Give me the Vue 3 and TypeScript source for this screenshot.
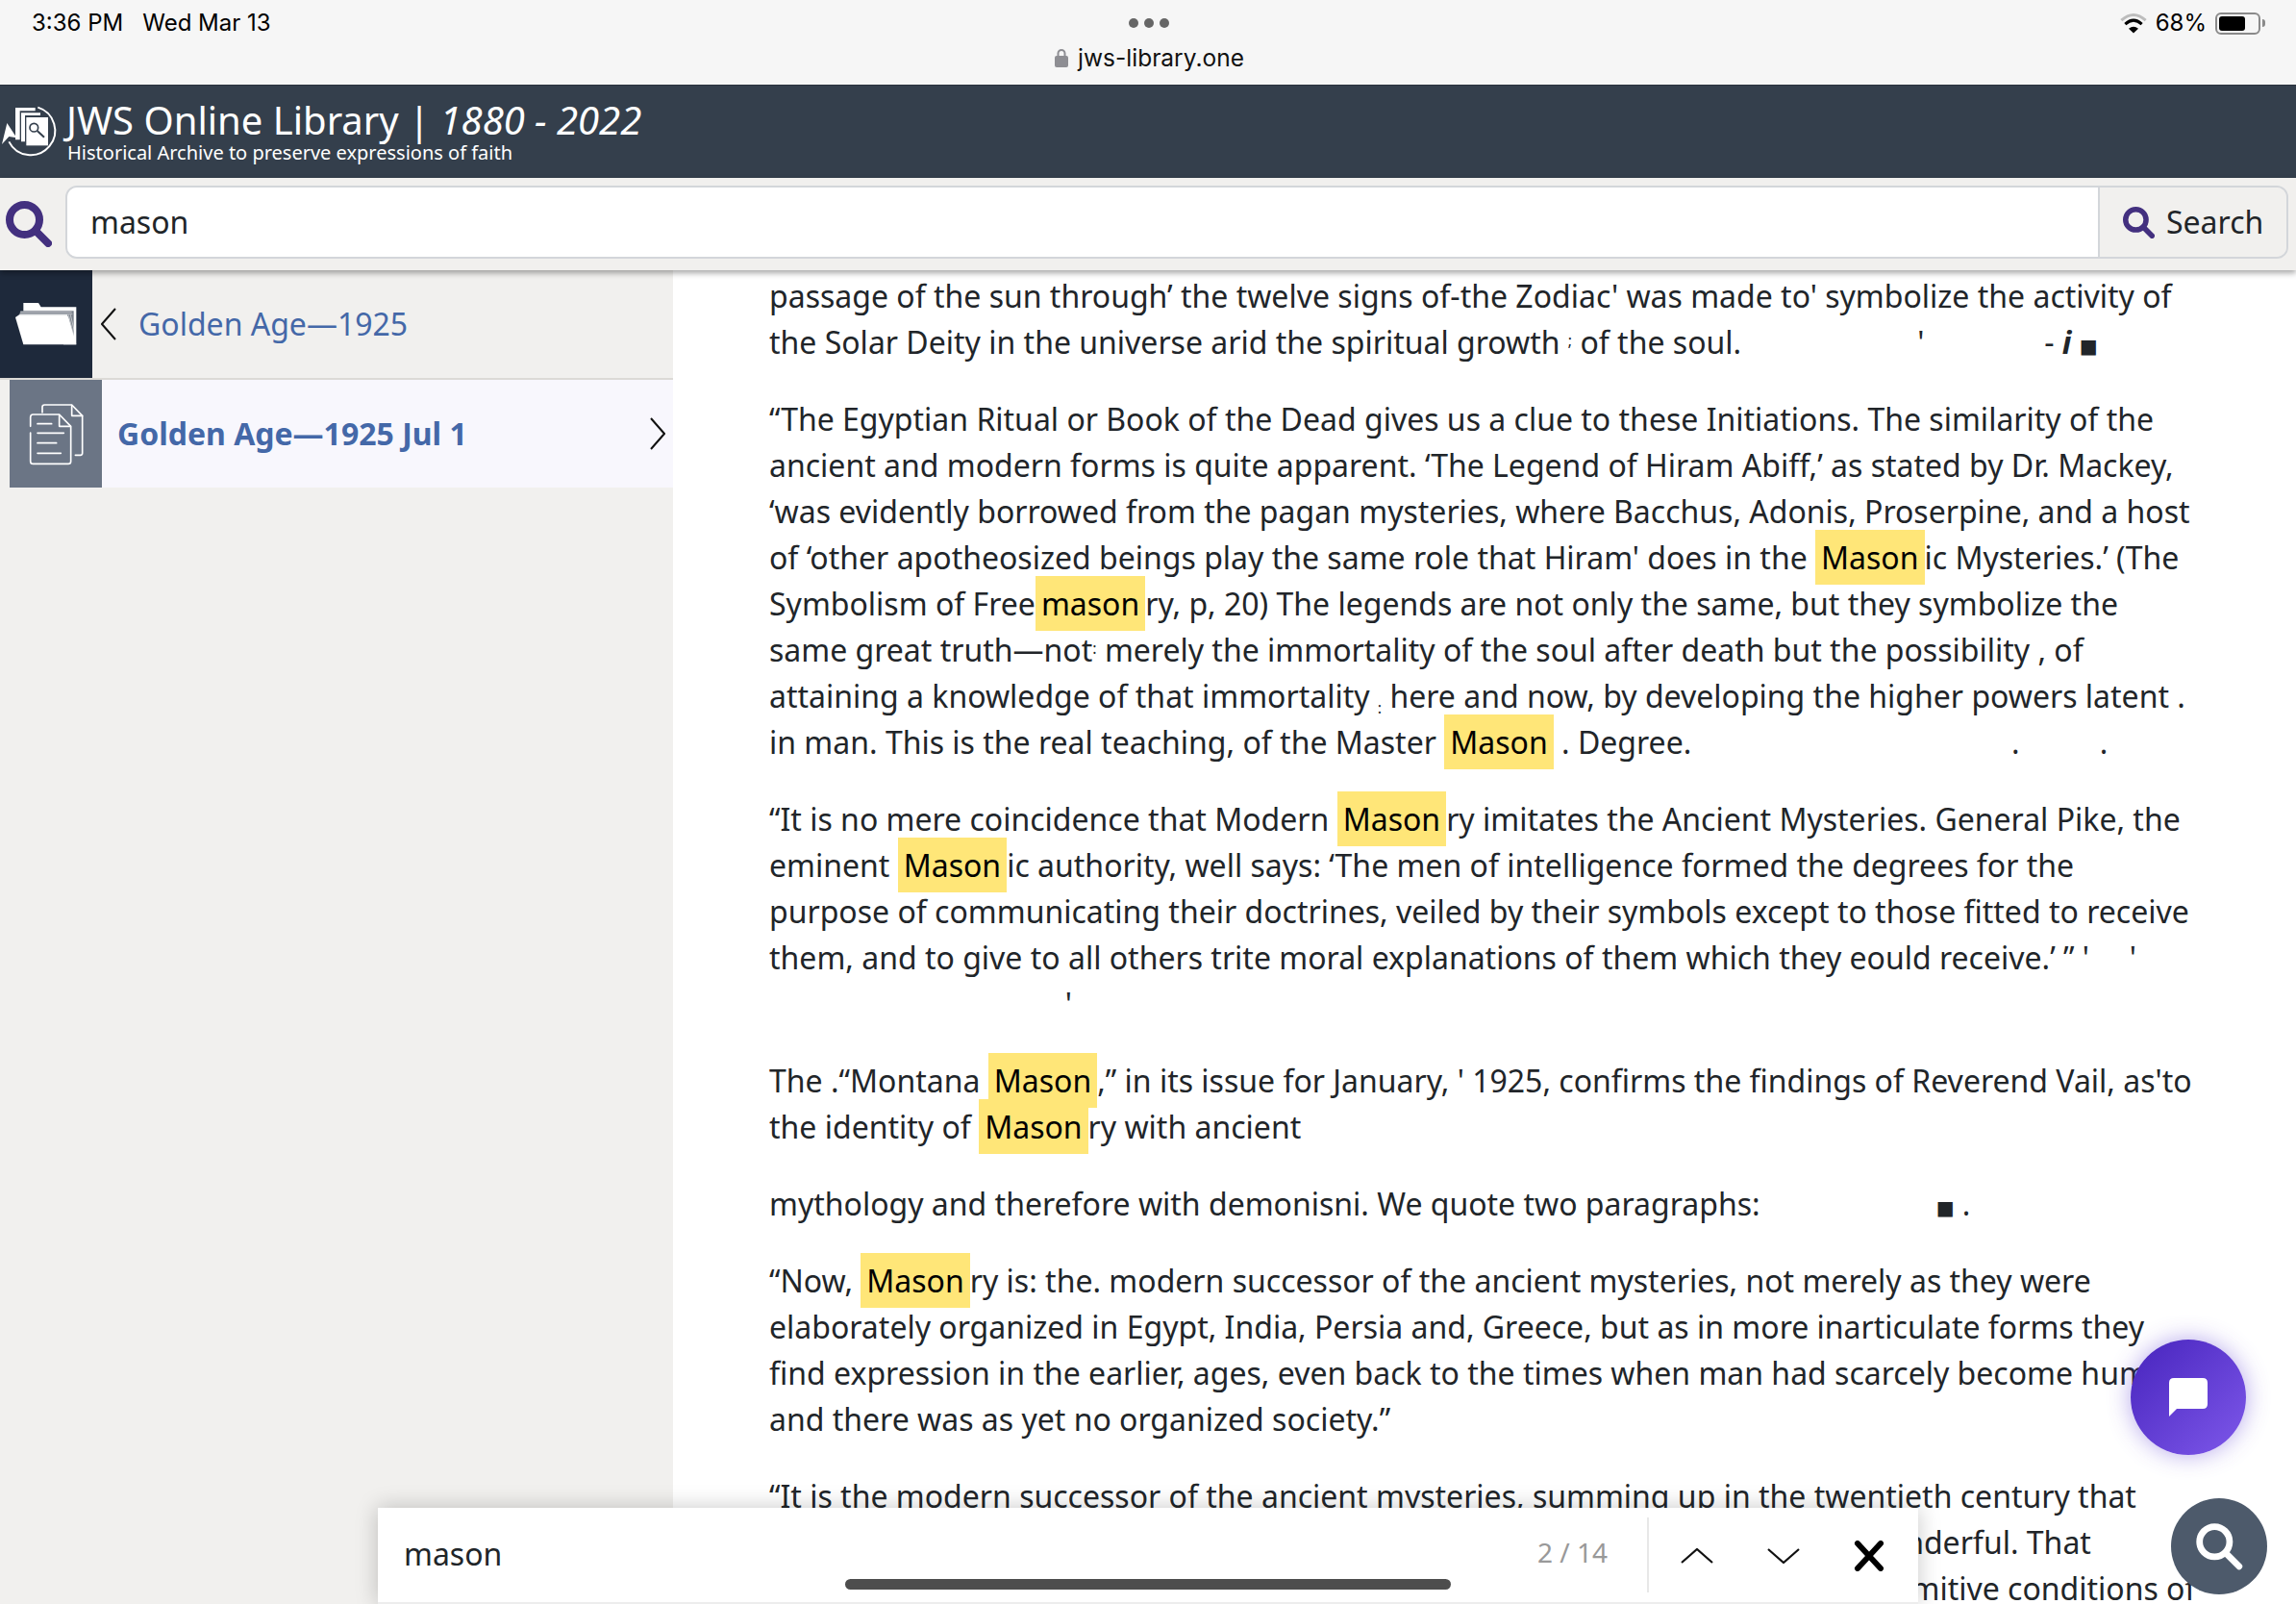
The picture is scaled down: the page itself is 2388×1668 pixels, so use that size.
<script setup lang="ts">
interface Segment {
  kind: 'text' | 'mark' | 'speck' | 'low' | 'block' | 'stray'
  text: string
}

const sp = (n: number) => ' '.repeat(n)

// [x] = search hit, {x} = raised ocr speck, _x_ = lowered speck, ^x^ = square, ~x~ = stray bold italic
const rawParagraphs: string[] = [
  `passage of the sun through’ the twelve signs of-the Zodiac' was made to' symbolize the activity of the Solar Deity in the universe arid the spiritual growth {;} of the soul.${sp(22)}'${sp(15)}- ~i~ ^■^`,
  `“The Egyptian Ritual or Book of the Dead gives us a clue to these Initiations. The similarity of the ancient and modern forms is quite apparent. ‘The Legend of Hiram Abiff,’ as stated by Dr. Mackey, ‘was evidently borrowed from the pagan mysteries, where Bacchus, Adonis, Proserpine, and a host of ‘other apotheosized beings play the same role that Hiram' does in the [Mason]ic Mysteries.’ (The Symbolism of Free[mason]ry, p, 20) The legends are not only the same, but they symbolize the same great truth—not{:} merely the immortality of the soul after death but the possibility , of attaining a knowledge of that immortality _:_ here and now, by developing the higher powers latent . in man. This is the real teaching, of the Master [Mason] . Degree.${sp(40)}.${sp(10)}.`,
  `“It is no mere coincidence that Modern [Mason]ry imitates the Ancient Mysteries. General Pike, the eminent [Mason]ic authority, well says: ‘The men of intelligence formed the degrees for the purpose of communicating their doctrines, veiled by their symbols except to those fitted to receive them, and to give to all others trite moral explanations of them which they eould receive.’ ” '${sp(5)}'\n${sp(37)}'`,
  `The .“Montana [Mason],” in its issue for January, ' 1925, confirms the findings of Reverend Vail, as'to the identity of [Mason]ry with ancient`,
  `mythology and therefore with demonisni. We quote two paragraphs:${sp(22)}^■^ .`,
  `“Now, [Mason]ry is: the. modern successor of the ancient mysteries, not merely as they were elaborately organized in Egypt, India, Persia and, Greece, but as in more inarticulate forms they find expression in the earlier, ages, even back to the times when man had scarcely become human and there was as yet no organized society.”`,
  `“It is the modern successor of the ancient mysteries, summing up in the twentieth century that\nwhich in the elder past was held to be so secret, so sacred and so very, very wonderful. That\nwhich was found once in the crude rituals of an early age when man lived in primitive conditions of`,
]

function parseParagraph(raw: string): Segment[] {
  return raw
    .split(/(\[[^\]]+\]|\{[^}]+\}|_[^_]+_|\^[^^]+\^|~[^~]+~)/)
    .filter((part) => part.length > 0)
    .map((part): Segment => {
      const inner = part.slice(1, -1)
      if (part[0] === '[') return { kind: 'mark', text: inner }
      if (part[0] === '{') return { kind: 'speck', text: inner }
      if (part[0] === '_') return { kind: 'low', text: inner }
      if (part[0] === '^') return { kind: 'block', text: inner }
      if (part[0] === '~') return { kind: 'stray', text: inner }
      return { kind: 'text', text: part }
    })
}

const paragraphs = rawParagraphs.map(parseParagraph)
</script>

<template>
  <div class="page">
    <div class="statusbar">
      <div class="status-row">
        <div class="status-left">
          <span>3:36 PM</span>
          <span>Wed Mar 13</span>
        </div>
        <div class="dots"><i></i><i></i><i></i></div>
        <div class="status-right">
          <svg class="wifi" viewBox="45 38 90 65" width="30" height="22">
            <path d="M52 62 Q90 28 128 62" fill="none" stroke="#bdbdbd" stroke-width="9" />
            <path d="M64 74 Q90 50 116 74" fill="none" stroke="#000" stroke-width="9" />
            <path d="M75 88 L90 102 L105 88 Q90 76 75 88Z" fill="#000" />
          </svg>
          <span class="percent">68%</span>
          <div class="battery"><div class="battery-fill"></div></div>
          <div class="battery-nub"></div>
        </div>
      </div>
      <div class="url">
        <svg viewBox="0 0 14 20" width="14" height="20">
          <path d="M3.5 9V5.5a3.5 3.5 0 0 1 7 0V9" fill="none" stroke="#8e8e93" stroke-width="2" />
          <rect x="0" y="8" width="14" height="12" rx="2" fill="#8e8e93" />
        </svg>
        <span>jws-library.one</span>
      </div>
    </div>

    <header class="header">
      <svg class="logo" viewBox="0 0 240 210" width="80" height="70">
        <path d="M118 35 A76 76 0 1 1 28 142" fill="none" stroke="#fff" stroke-width="6" />
        <path d="M22 84 L52 130 L28 126 L6 150Z" fill="#fff" />
        <path d="M48 36 H110 V46 H62 V136 H48Z" fill="#fff" />
        <path d="M66 52 H126 V60 H78 V142 H66Z" fill="#fff" />
        <rect x="82" y="66" width="68" height="88" fill="#fff" />
        <circle cx="106" cy="98" r="13" fill="none" stroke="#343f4c" stroke-width="5" />
        <path d="M116 108 L138 128" stroke="#343f4c" stroke-width="6" />
      </svg>
      <div class="brand">
        <div class="brand-title">JWS Online Library | <em>1880 - 2022</em></div>
        <div class="brand-sub">Historical Archive to preserve expressions of faith</div>
      </div>
    </header>

    <div class="searchbar">
      <svg class="search-icon" viewBox="0 0 48 48" width="48" height="48">
        <circle cx="19.5" cy="19.5" r="15.5" fill="none" stroke="#43307f" stroke-width="8" />
        <path d="M31 31 L44 44" stroke="#43307f" stroke-width="8" stroke-linecap="round" />
      </svg>
      <div class="search-group">
        <div class="search-input">mason</div>
        <div class="search-btn">
          <svg viewBox="0 0 48 48" width="33" height="33">
            <circle cx="19.5" cy="19.5" r="15.5" fill="none" stroke="#43307f" stroke-width="8" />
            <path d="M31 31 L44 44" stroke="#43307f" stroke-width="8" stroke-linecap="round" />
          </svg>
          <span>Search</span>
        </div>
      </div>
    </div>

    <main class="main">
      <aside class="sidebar">
        <div class="crumb">
          <div class="crumb-icon">
            <svg viewBox="50 72 192 138" width="64" height="46">
              <path d="M75 120 V75 H122 L130 88 H240 V205 H200 V120Z" fill="#fff" />
              <path d="M66 100 H232 V180 L215 118 H60Z" fill="#79808a" />
              <path d="M66 104 H226 M64 110 H228 M222 112 L236 172 M216 112 L232 176" stroke="#fff" stroke-width="1.6" fill="none" />
              <path d="M50 120 L62 112 H212 L240 205 H75Z" fill="#fff" />
            </svg>
          </div>
          <svg class="chev-left" viewBox="0 0 16 34" width="16" height="34">
            <path d="M15 1 L1 17 L15 33" fill="none" stroke="#111" stroke-width="2" />
          </svg>
          <span class="crumb-text">Golden Age—1925</span>
        </div>
        <div class="issue">
          <div class="issue-icon">
            <svg viewBox="85 385 177 195" width="59" height="65" fill="none" stroke="#fff" stroke-width="5" stroke-linejoin="round" stroke-linecap="round">
              <path d="M130 415 V398 Q130 391 137 391 H222 L255 425 V542 Q255 548 249 548 H233" />
              <path d="M222 393 V425 H255" />
              <path d="M93 458 V430 Q93 421 101 421 H183 L219 458 V567 Q219 575 211 575 H101 Q93 575 93 567 V478" />
              <path d="M183 423 V458 H218" />
              <path d="M115 450 H159 M115 479 H197 M115 510 H174 M115 542 H188" />
            </svg>
          </div>
          <span class="issue-text">Golden Age—1925 Jul 1</span>
          <svg class="chev-right" viewBox="0 0 16 34" width="16" height="34">
            <path d="M1 1 L15 17 L1 33" fill="none" stroke="#111" stroke-width="2" />
          </svg>
        </div>
      </aside>

      <article class="reader">
        <p v-for="(segments, i) in paragraphs" :key="i">
          <template v-for="(seg, j) in segments" :key="j">
            <mark v-if="seg.kind === 'mark'">{{ seg.text }}</mark>
            <b v-else-if="seg.kind === 'stray'" class="stray">{{ seg.text }}</b>
            <span v-else-if="seg.kind !== 'text'" :class="seg.kind">{{ seg.text }}</span>
            <template v-else>{{ seg.text }}</template>
          </template>
        </p>
      </article>
    </main>

    <div class="findbar">
      <span class="find-text">mason</span>
      <span class="find-count">2 / 14</span>
      <div class="find-actions">
        <svg viewBox="0 0 34 16" width="34" height="16">
          <path d="M1 15 L17 1 L33 15" fill="none" stroke="#111" stroke-width="2.2" />
        </svg>
        <svg viewBox="0 0 34 16" width="34" height="16">
          <path d="M1 1 L17 15 L33 1" fill="none" stroke="#111" stroke-width="2.2" />
        </svg>
        <svg viewBox="0 0 32 32" width="32" height="32">
          <path d="M4 3 L28 29 M28 3 L4 29" fill="none" stroke="#000" stroke-width="6" stroke-linecap="round" />
        </svg>
      </div>
    </div>

    <div class="home-indicator"></div>

    <button class="chat-btn" type="button" aria-label="Chat">
      <svg viewBox="0 0 40 40" width="40" height="40">
        <path d="M5 0 H35 Q40 0 40 5 V27 Q40 32 35 32 H8 L0 40 V5 Q0 0 5 0Z" fill="#fff" />
      </svg>
    </button>
    <button class="fab-search" type="button" aria-label="Search">
      <svg viewBox="0 0 48 48" width="50" height="50">
        <circle cx="19.5" cy="19.5" r="15" fill="none" stroke="#fff" stroke-width="6.5" />
        <path d="M31 31 L44 44" stroke="#fff" stroke-width="6.5" stroke-linecap="round" />
      </svg>
    </button>
  </div>
</template>

<style scoped>
.page {
  position: relative;
  display: flex;
  flex-direction: column;
  height: 1668px;
  overflow: hidden;
  background: #fff;
  color: #212529;
  font-family: 'Noto Sans', sans-serif;
  font-size: 32px;
  line-height: 48px;
}

.statusbar {
  flex: none;
  height: 88px;
  background: #f6f6f6;
  font-family: Inter, 'Liberation Sans', sans-serif;
  color: #000;
}
.status-row {
  display: grid;
  grid-template-columns: 1fr auto 1fr;
  align-items: center;
  height: 48px;
  padding: 0 32px 0 33px;
  font-size: 24px;
  line-height: 48px;
}
.status-left { display: flex; gap: 20px; }
.dots { display: flex; gap: 6px; }
.dots i { width: 10px; height: 10px; border-radius: 50%; background: #666; }
.status-right { display: flex; align-items: center; justify-content: flex-end; }
.wifi { margin-right: 8px; }
.percent { font-size: 24px; margin-right: 9px; }
.battery {
  box-sizing: border-box;
  width: 47px;
  height: 23px;
  padding: 2px;
  border: 2px solid #8a8a8a;
  border-radius: 6px;
}
.battery-fill { width: 27px; height: 15px; border-radius: 3px; background: #000; }
.battery-nub { width: 3px; height: 8px; margin-left: 2px; border-radius: 0 3px 3px 0; background: #8a8a8a; }
.url {
  display: flex;
  align-items: center;
  justify-content: center;
  gap: 10px;
  height: 24px;
  padding-left: 3px;
  font-size: 24.5px;
  line-height: 24px;
  color: #111;
}

.header {
  flex: none;
  display: flex;
  align-items: flex-start;
  height: 97px;
  background: #343f4c;
  border-top: 1px solid #2a323d;
  box-sizing: border-box;
  color: #fff;
}
.logo { flex: none; margin-top: 11px; margin-right: -11px; }
.brand-title { margin-top: 11px; font-size: 40px; line-height: 50px; white-space: nowrap; }
.brand-title em { font-style: italic; }
.brand-sub { margin-top: -5px; margin-left: 1px; font-size: 20px; line-height: 28px; white-space: nowrap; }

.searchbar {
  position: relative;
  z-index: 2;
  flex: none;
  display: flex;
  align-items: center;
  height: 96px;
  padding: 0 8px 0 6px;
  box-sizing: border-box;
  background: #f1f0ee;
  box-shadow: 0 3px 6px rgba(0, 0, 0, 0.35);
}
.search-icon { flex: none; margin-right: 14px; }
.search-group {
  flex: 1;
  display: flex;
  height: 76px;
  margin-top: -4px;
  box-sizing: border-box;
  border: 2px solid #d3d6da;
  border-radius: 12px;
  overflow: hidden;
}
.search-input {
  flex: 1;
  padding-left: 24px;
  background: #fff;
  line-height: 72px;
}
.search-btn {
  display: flex;
  align-items: center;
  gap: 12px;
  width: 196px;
  padding-left: 24px;
  box-sizing: border-box;
  border-left: 2px solid #d3d6da;
  background: #f1f0ee;
}

.main {
  flex: 1;
  display: flex;
  min-height: 0;
}
.sidebar {
  flex: none;
  width: 700px;
  background: #f1f0ee;
}
.crumb {
  display: flex;
  align-items: center;
  height: 114px;
  border-bottom: 2px solid #dcdad6;
  box-sizing: border-box;
}
.crumb-icon {
  flex: none;
  display: flex;
  align-items: center;
  justify-content: center;
  align-self: stretch;
  width: 96px;
  background: #1e293b;
}
.chev-left { margin-left: 9px; }
.crumb-text { margin-left: 23px; color: #4468a8; }
.issue {
  display: flex;
  align-items: center;
  height: 112px;
  margin-left: 10px;
  padding-right: 8px;
  background: #f8f7fd;
}
.issue-icon {
  flex: none;
  display: flex;
  align-items: center;
  justify-content: center;
  align-self: stretch;
  width: 96px;
  background: #6b7585;
}
.issue-text { flex: 1; margin-left: 16px; font-weight: 700; color: #4468a8; }

.reader {
  flex: 1;
  min-width: 0;
  padding: 3px 100px 0 100px;
}
.reader p {
  max-width: 1484px;
  margin: 0 0 32px;
  white-space: pre-wrap;
}
.reader mark {
  padding: 7px 6px;
  background: #ffe678;
  color: #000;
}
.speck { font-size: 16px; line-height: 0; vertical-align: 8px; }
.low { font-size: 16px; line-height: 0; vertical-align: -6px; }
.block { font-size: 20px; line-height: 0; vertical-align: 1px; font-family: 'DejaVu Sans', sans-serif; }
.stray { font-style: italic; }

.findbar {
  position: absolute;
  left: 393px;
  top: 1568px;
  display: flex;
  align-items: center;
  width: 1602px;
  height: 100px;
  padding: 0 0 2px 27px;
  box-sizing: border-box;
  border-bottom: 2px solid #ededed;
  background: #fff;
  box-shadow: 0 0 22px rgba(0, 0, 0, 0.22);
}
.find-text { flex: 1; }
.find-count { margin-top: -4px; font-size: 28px; color: #999; }
.find-actions {
  display: flex;
  align-items: center;
  gap: 56px;
  align-self: flex-start;
  height: 78px;
  margin: 10px 35px 0 41px;
  padding-left: 33px;
  border-left: 2px solid #e8e8e8;
}
.find-actions svg { margin-top: 1px; }

.home-indicator {
  position: absolute;
  left: 879px;
  top: 1642px;
  width: 630px;
  height: 11px;
  border-radius: 6px;
  background: #4d4d4d;
}

.chat-btn,
.fab-search {
  position: absolute;
  display: flex;
  align-items: center;
  justify-content: center;
  padding: 0;
  border: 0;
  border-radius: 50%;
}
.chat-btn {
  left: 2216px;
  top: 1393px;
  width: 120px;
  height: 120px;
  background: linear-gradient(135deg, #4724bd, #7e58ea);
  box-shadow: 0 0 24px rgba(90, 60, 210, 0.45);
}
.fab-search {
  left: 2258px;
  top: 1558px;
  width: 100px;
  height: 100px;
  background: #4d5a6b;
}
</style>

<style>
html, body { margin: 0; background: #fff; }
</style>
